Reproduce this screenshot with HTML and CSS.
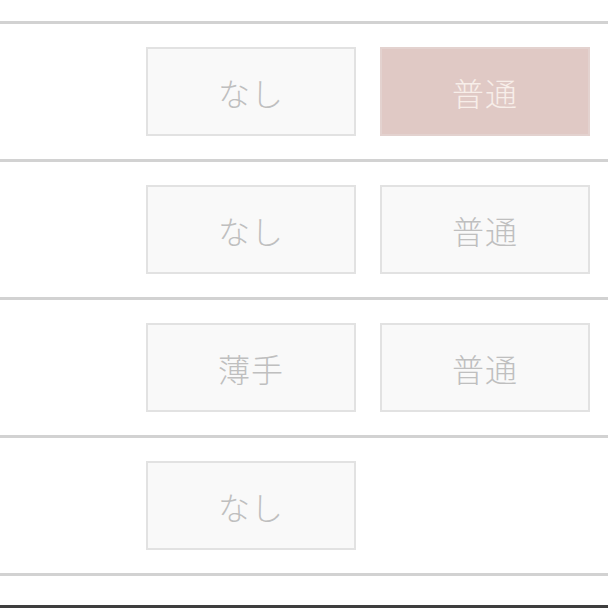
FILE: index.html
```html
<!DOCTYPE html>
<html lang="ja">
<head>
<meta charset="utf-8">
<link rel="stylesheet" href="styles.css">
</head>
<body>
<div class="page">
  <div class="list">
    <div class="row">
      <div class="opt">なし</div>
      <div class="opt selected">普通</div>
    </div>
    <div class="row">
      <div class="opt">なし</div>
      <div class="opt">普通</div>
    </div>
    <div class="row">
      <div class="opt">薄手</div>
      <div class="opt">普通</div>
    </div>
    <div class="row">
      <div class="opt">なし</div>
    </div>
  </div>
  <div class="footer"></div>
</div>
</body>
</html>
```
FILE: styles.css
```css
html, body {
  margin: 0;
  padding: 0;
  background: #ffffff;
}
.page {
  width: 608px;
  height: 608px;
  display: flex;
  flex-direction: column;
  overflow: hidden;
  font-family: "Noto Sans CJK JP", "Noto Sans", sans-serif;
}
.list {
  padding-top: 21px;
  border-bottom: 3px solid #d2d2d2;
}
.row {
  height: 135px;
  border-top: 3px solid #d2d2d2;
  display: flex;
  align-items: center;
  padding-left: 146px;
  gap: 24px;
}
.opt {
  width: 206px;
  height: 85px;
  border: 2px solid #e2e2e2;
  background: #f9f9f9;
  color: #bfbfbf;
  font-size: 32px;
  font-weight: 300;
  display: flex;
  align-items: center;
  justify-content: center;
  letter-spacing: 1px;
}
.opt.selected {
  background: #e0c9c5;
  border-color: #e3d2cf;
  color: #f7eee9;
}
.footer {
  flex: 1;
  border-bottom: 3px solid #3e3e3e;
  box-sizing: border-box;
}
```
